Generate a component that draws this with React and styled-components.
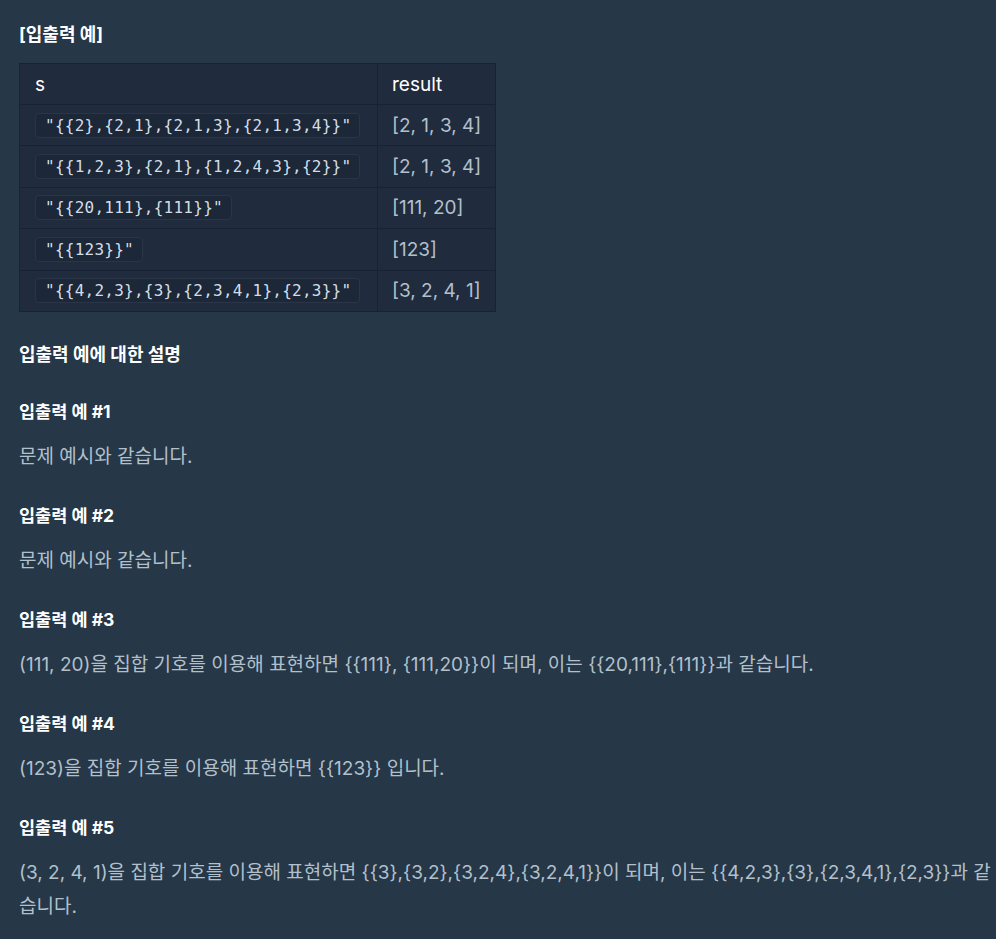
import React from "react";
import styled, { createGlobalStyle } from "styled-components";

const Global = createGlobalStyle`
  html, body { margin: 0; padding: 0; background: #263747; }
  body { font-family: Inter, "Noto Sans CJK KR", sans-serif; }
`;

const Page = styled.div`
  padding: 23px 0 20px 19px;
  color: #b2c0cc;
  font-size: 19px;
  min-height: 939px;
  box-sizing: border-box;
`;

const Title = styled.h4`
  margin: 0;
  font-size: 18px;
  line-height: 24px;
  font-weight: 700;
  color: #ffffff;
`;

const Table = styled.table`
  margin-top: 16px;
  border-collapse: collapse;
  table-layout: fixed;
  width: 477px;
  background: #202b3d;
  border: 1px solid #172334;
`;

const Col = styled.col`
  width: ${(p) => p.$w}px;
`;

const Th = styled.th`
  text-align: left;
  font-weight: 400;
  color: #ffffff;
  font-size: 19px;
  height: 40px;
  padding: 0 0 0 ${(p) => (p.$narrow ? "14px" : "15px")};
  border: 1px solid #172334;
`;

const Td = styled.td`
  font-size: 19px;
  color: #b2c0cc;
  height: 40.4px;
  padding: 0 0 0 ${(p) => (p.$narrow ? "14px" : "15px")};
  border: 1px solid #172334;
  vertical-align: middle;
  white-space: nowrap;
`;

const Code = styled.code`
  display: inline-block;
  font-family: "DejaVu Sans Mono", monospace;
  font-size: 16px;
  letter-spacing: 0.25px;
  line-height: 23px;
  padding: 0 8px 0 9px;
  border-radius: 4px;
  background: #1c2737;
  border: 1px solid #2a3648;
  color: #d3dde8;
  white-space: nowrap;
`;

const SectionTitle = styled.h4`
  margin: 31px 0 0;
  font-size: 18px;
  line-height: 24px;
  font-weight: 700;
  color: #ffffff;
`;

const Case = styled.section`
  margin-top: ${(p) => (p.$first ? "33px" : "30px")};
`;

const CaseTitle = styled.h5`
  margin: 0;
  font-size: 17.5px;
  line-height: 24px;
  font-weight: 700;
  color: #ffffff;
`;

const Para = styled.p`
  margin: 16px 0 0;
  font-size: 19px;
  line-height: 34px;
  color: #b2c0cc;
  word-break: break-all;
`;

const rows = [
  ['"{{2},{2,1},{2,1,3},{2,1,3,4}}"', "[2, 1, 3, 4]"],
  ['"{{1,2,3},{2,1},{1,2,4,3},{2}}"', "[2, 1, 3, 4]"],
  ['"{{20,111},{111}}"', "[111, 20]"],
  ['"{{123}}"', "[123]"],
  ['"{{4,2,3},{3},{2,3,4,1},{2,3}}"', "[3, 2, 4, 1]"],
];

const cases = [
  "문제 예시와 같습니다.",
  "문제 예시와 같습니다.",
  "(111, 20)을 집합 기호를 이용해 표현하면 {{111}, {111,20}}이 되며, 이는 {{20,111},{111}}과 같습니다.",
  "(123)을 집합 기호를 이용해 표현하면 {{123}} 입니다.",
  "(3, 2, 4, 1)을 집합 기호를 이용해 표현하면 {{3},{3,2},{3,2,4},{3,2,4,1}}이 되며, 이는 {{4,2,3},{3},{2,3,4,1},{2,3}}과 같습니다.",
];

export default function App() {
  return (
    <>
      <Global />
      <Page>
        <Title>[입출력 예]</Title>
        <Table>
          <colgroup>
            <Col $w={358} />
            <Col $w={118} />
          </colgroup>
          <thead>
            <tr>
              <Th>s</Th>
              <Th $narrow>result</Th>
            </tr>
          </thead>
          <tbody>
            {rows.map(([s, r], i) => (
              <tr key={i}>
                <Td>
                  <Code>{s}</Code>
                </Td>
                <Td $narrow>{r}</Td>
              </tr>
            ))}
          </tbody>
        </Table>
        <SectionTitle>입출력 예에 대한 설명</SectionTitle>
        {cases.map((t, i) => (
          <Case key={i} $first={i === 0}>
            <CaseTitle>입출력 예 #{i + 1}</CaseTitle>
            <Para>{t}</Para>
          </Case>
        ))}
      </Page>
    </>
  );
}
